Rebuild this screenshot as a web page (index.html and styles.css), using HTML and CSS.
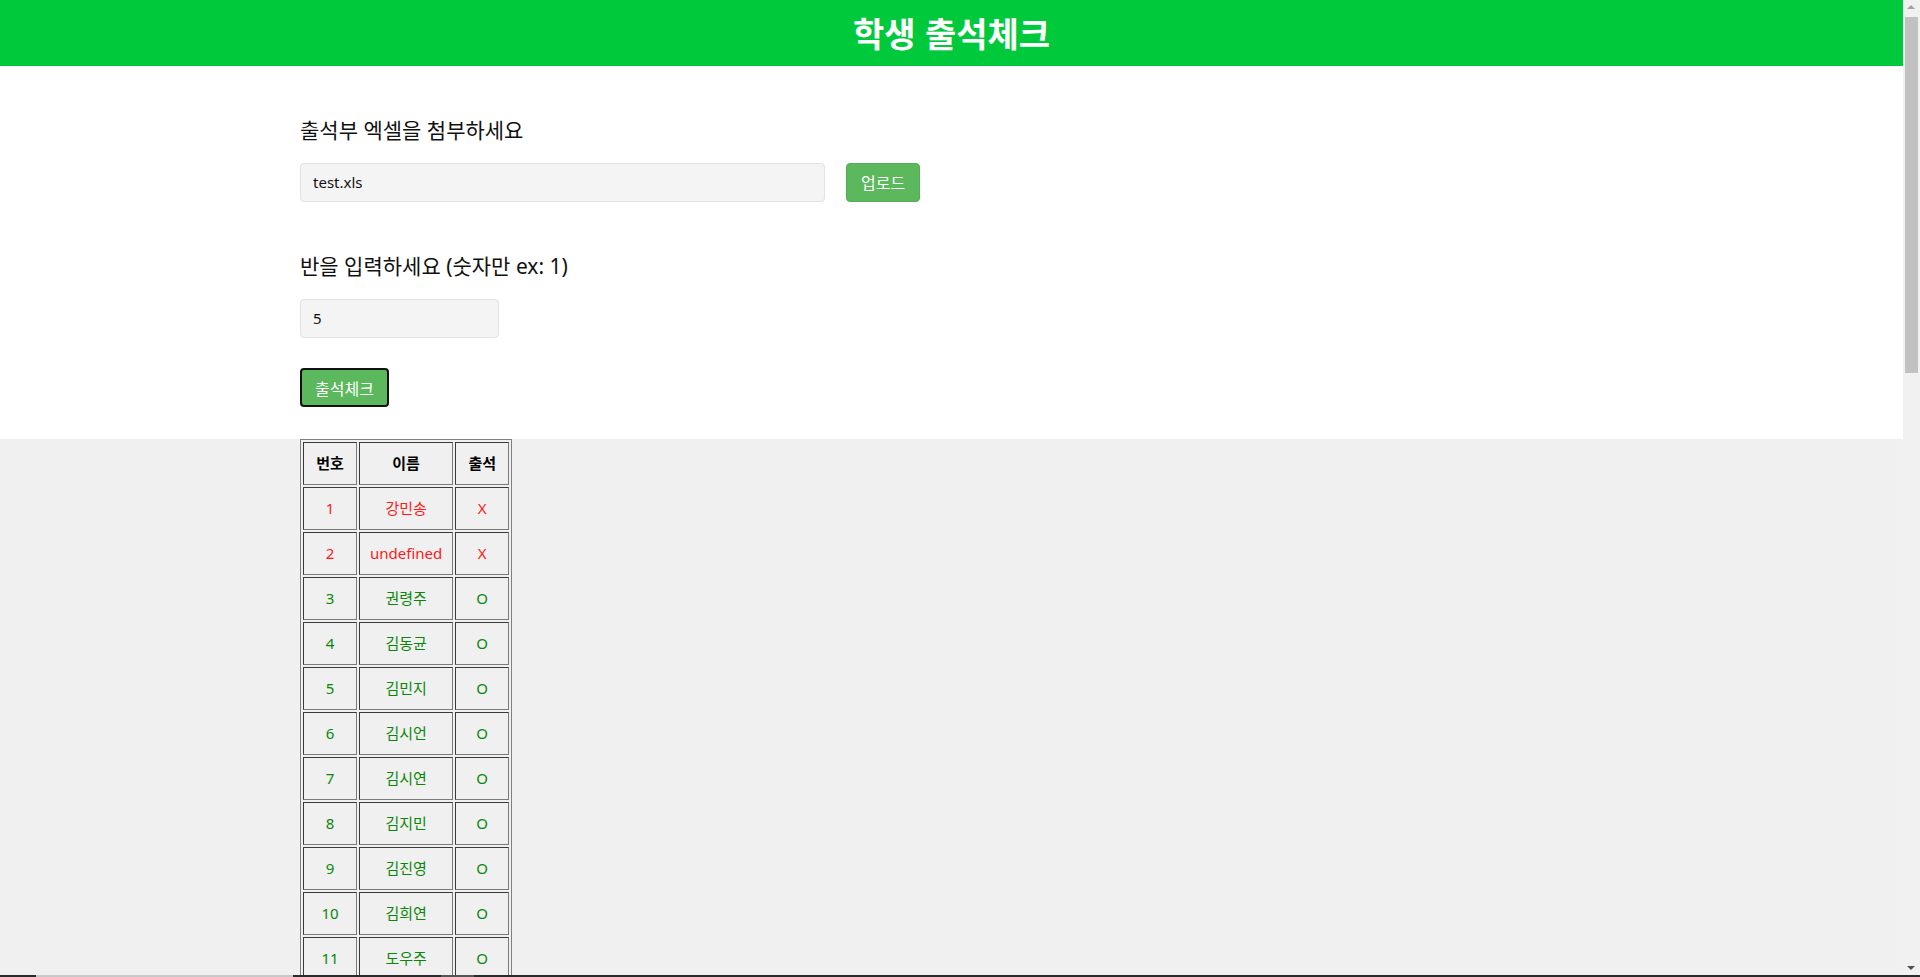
FILE: index.html
```html
<!DOCTYPE html>
<html lang="ko">
<head>
<meta charset="utf-8">
<title>학생 출석체크</title>
<link rel="stylesheet" href="styles.css">
</head>
<body>
<div class="page">
  <header class="topbar">
    <h1 class="title">학생 출석체크</h1>
  </header>
  <section class="form-area">
    <p class="label">출석부 엑셀을 첨부하세요</p>
    <div class="file-row">
      <div class="text-input file-input">test.xls</div>
      <button class="btn btn-upload">업로드</button>
    </div>
    <p class="label label-second">반을 입력하세요 (숫자만 ex: 1)</p>
    <div class="text-input class-input">5</div>
    <button class="btn btn-check">출석체크</button>
  </section>
  <main class="result">
    <table class="att-table">
      <thead>
        <tr><th class="c-no">번호</th><th class="c-name">이름</th><th class="c-att">출석</th></tr>
      </thead>
      <tbody>
        <tr class="absent"><td>1</td><td>강민송</td><td>X</td></tr>
        <tr class="absent"><td>2</td><td>undefined</td><td>X</td></tr>
        <tr class="present"><td>3</td><td>권령주</td><td>O</td></tr>
        <tr class="present"><td>4</td><td>김동균</td><td>O</td></tr>
        <tr class="present"><td>5</td><td>김민지</td><td>O</td></tr>
        <tr class="present"><td>6</td><td>김시언</td><td>O</td></tr>
        <tr class="present"><td>7</td><td>김시연</td><td>O</td></tr>
        <tr class="present"><td>8</td><td>김지민</td><td>O</td></tr>
        <tr class="present"><td>9</td><td>김진영</td><td>O</td></tr>
        <tr class="present"><td>10</td><td>김희연</td><td>O</td></tr>
        <tr class="present"><td>11</td><td>도우주</td><td>O</td></tr>
      </tbody>
    </table>
  </main>
</div>
<div class="scrollbar">
  <span class="sb-arrow sb-up"></span>
  <span class="sb-thumb"></span>
  <span class="sb-arrow sb-down"></span>
</div>
<div class="taskbar-edge">
  <span class="seg seg-dark seg-a"></span>
  <span class="seg seg-light seg-b"></span>
  <span class="seg seg-dark seg-c"></span>
  <span class="seg seg-mid seg-d"></span>
  <span class="seg seg-dark seg-e"></span>
</div>
</body>
</html>
```
FILE: styles.css
```css
html, body {
  margin: 0;
  padding: 0;
}
body {
  background: #f0f0f0;
  font-family: "Noto Sans", "Noto Sans CJK KR", sans-serif;
  color: #111;
}
.page {
  margin-right: 17px;
}
.topbar {
  background: #00c93c;
  height: 66px;
  display: flex;
  align-items: center;
  justify-content: center;
}
.title {
  margin: 0;
  color: #fff;
  font-family: "Noto Sans CJK KR", sans-serif;
  font-size: 34px;
  font-weight: 700;
  letter-spacing: 0;
  line-height: 66px;
}
.form-area {
  background: #fff;
  padding: 49px 0 32px 300px;
  display: flex;
  flex-direction: column;
  align-items: flex-start;
}
.label {
  margin: 0;
  font-size: 21px;
  line-height: 30px;
  color: #111;
  font-family: "Noto Sans", "Noto Sans CJK KR", sans-serif;
}
.label-second {
  margin-top: 49px;
}
.file-row {
  display: flex;
  gap: 21px;
  margin-top: 18px;
}
.text-input {
  box-sizing: border-box;
  height: 39px;
  background: #f4f4f4;
  border: 1px solid #e2e2e2;
  border-radius: 4px;
  padding: 0 12px;
  font-size: 15px;
  line-height: 37px;
  color: #111;
}
.file-input {
  width: 525px;
}
.class-input {
  width: 199px;
  margin-top: 18px;
}
.btn {
  box-sizing: border-box;
  height: 39px;
  padding: 0 12px;
  background: #5cb85c;
  border: 1px solid #53ad53;
  border-radius: 4px;
  color: #fff;
  font-family: "Noto Sans CJK KR", sans-serif;
  font-size: 16px;
  line-height: 37px;
}
.btn-upload {
  padding: 0 14px;
}
.btn-check {
  margin-top: 30px;
  width: 89px;
  padding: 0;
  border: 2px solid #111;
}
.result {
  padding-left: 300px;
}
.att-table {
  border-collapse: separate;
  border-spacing: 2px;
  border: 1px solid #808080;
  font-size: 15px;
  text-align: center;
}
.att-table th,
.att-table td {
  padding: 10px;
  line-height: 21px;
  border-top: 1px solid #3a3a3a;
  border-left: 1px solid #3a3a3a;
  border-right: 1px solid #7a7a7a;
  border-bottom: 1px solid #7a7a7a;
  font-family: "Noto Sans", "Noto Sans CJK KR", sans-serif;
}
.att-table th {
  font-weight: 700;
  color: #000;
}
.c-no, .c-att {
  width: 32px;
  box-sizing: content-box;
}
.c-name {
  width: 72px;
  box-sizing: content-box;
}
.absent td {
  color: #ff1a1a;
}
.present td {
  color: #0a870a;
}
.scrollbar {
  position: fixed;
  top: 0;
  right: 0;
  bottom: 0;
  width: 17px;
  background: #f1f1f1;
}
.sb-thumb {
  position: absolute;
  top: 17px;
  left: 2px;
  width: 13px;
  height: 356px;
  background: #c1c1c1;
}
.sb-arrow {
  position: absolute;
  left: 4px;
  width: 0;
  height: 0;
  border-left: 4px solid transparent;
  border-right: 4px solid transparent;
}
.sb-up {
  top: 5px;
  border-bottom: 4px solid #a3a3a3;
}
.sb-down {
  bottom: 7px;
  border-top: 4px solid #505050;
}
.taskbar-edge {
  position: fixed;
  left: 0;
  right: 0;
  bottom: 0;
  height: 2px;
  display: flex;
}
.seg { height: 2px; }
.seg-dark { background: #2b2b2b; }
.seg-light { background: #c8c8c8; }
.seg-mid { background: #555; }
.seg-a { width: 36px; }
.seg-b { width: 257px; }
.seg-c { width: 148px; }
.seg-d { width: 33px; }
.seg-e { flex: 1; }
```
